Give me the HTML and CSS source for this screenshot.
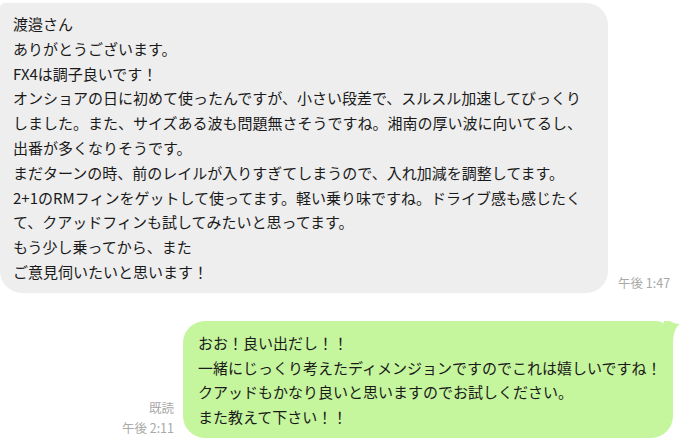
FILE: index.html
```html
<!DOCTYPE html>
<html lang="ja">
<head>
  <meta charset="UTF-8">
  <meta name="viewport" content="width=device-width, initial-scale=1.0">
  <title>トーク</title>
  <link rel="stylesheet" href="styles.css">
</head>
<body>
  <div class="chat">
    <div class="row row-in">
      <div class="bubble bubble-in">
        渡邉さん<br>
        ありがとうございます。<br>
        FX4は調子良いです！<br>
        オンショアの日に初めて使ったんですが、小さい段差で、スルスル加速してびっくり<br>
        しました。また、サイズある波も問題無さそうですね。湘南の厚い波に向いてるし、<br>
        出番が多くなりそうです。<br>
        まだターンの時、前のレイルが入りすぎてしまうので、入れ加減を調整してます。<br>
        2+1のRMフィンをゲットして使ってます。軽い乗り味ですね。ドライブ感も感じたく<br>
        て、クアッドフィンも試してみたいと思ってます。<br>
        もう少し乗ってから、また<br>
        ご意見伺いたいと思います！
      </div>
      <div class="meta">午後 1:47</div>
    </div>

    <div class="row row-out">
      <div class="meta meta-out">
        <span>既読</span>
        <span>午後 2:11</span>
      </div>
      <div class="bubble bubble-out">
        おお！良い出だし！！<br>
        一緒にじっくり考えたディメンジョンですのでこれは嬉しいですね！<br>
        クアッドもかなり良いと思いますのでお試しください。<br>
        また教えて下さい！！
        <svg class="tail" width="16" height="26" viewBox="0 0 16 26">
          <path d="M0 0 H6 C9 2 12 3 16 3 C12 6 9 10 9 26 H0 Z" fill="#c5f59d"/>
        </svg>
      </div>
    </div>
  </div>
</body>
</html>
```

FILE: styles.css
```css
* {
  margin: 0;
  padding: 0;
  box-sizing: border-box;
}

body {
  background: #fff;
  font-family: "Noto Sans CJK JP", "Noto Sans", sans-serif;
  color: #1a1a1a;
  width: 680px;
  height: 441px;
  overflow: hidden;
}

.chat {
  padding-top: 3px;
}

.row {
  display: flex;
  align-items: flex-end;
  gap: 10px;
}

.row-out {
  justify-content: flex-end;
  gap: 9px;
  margin-top: 28px;
  padding-right: 7px;
}

.bubble {
  position: relative;
  font-size: 15px;
  line-height: 24.8px;
  white-space: nowrap;
}

.bubble-in {
  width: 608px;
  background: #eeeeee;
  border-radius: 5px 22px 22px 22px;
  padding: 9px 13px 8px;
}

.bubble-out {
  width: 490px;
  background: #c5f59d;
  border-radius: 22px 18px 22px 22px;
  padding: 10px 15px 8px;
}

.tail {
  position: absolute;
  top: 0;
  right: -7px;
}

.meta {
  font-size: 12.5px;
  color: #a9a9a9;
  line-height: 18px;
  padding-bottom: 1px;
}

.meta-out {
  display: flex;
  flex-direction: column;
  align-items: flex-end;
  line-height: 20px;
  padding-bottom: 0;
}
```
